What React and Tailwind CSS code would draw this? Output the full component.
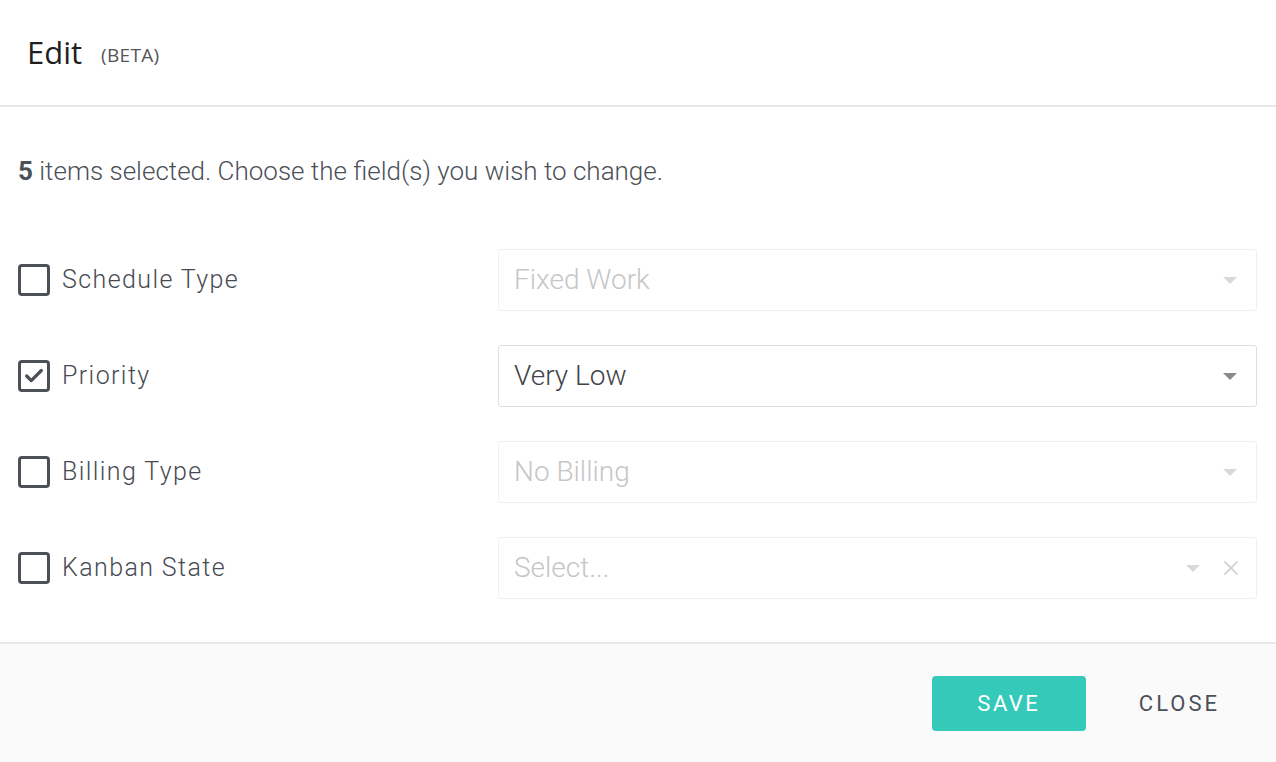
import { Check, X } from 'lucide-react';

const fields = [
  { label: 'Schedule Type', value: 'Fixed Work', checked: false },
  { label: 'Priority', value: 'Very Low', checked: true },
  { label: 'Billing Type', value: 'No Billing', checked: false },
  { label: 'Kanban State', value: 'Select...', checked: false, clearable: true },
];

const Caret = ({ className }) => (
  <svg width="14" height="7" viewBox="0 0 14 7" className={className}>
    <path d="M0 0 L14 0 L7 7 Z" fill="currentColor" />
  </svg>
);

const App = () => {
  return (
    <div className="w-[1276px] h-[762px] flex flex-col bg-white font-['Roboto',sans-serif] text-[#4b5058]">
      <div className="h-[107px] flex items-center px-[27px] border-b-2 border-[#e6e8eb] shrink-0">
        <h1 className="font-['Open_Sans',sans-serif] text-[31px] text-[#1f1f1f] leading-none">Edit</h1>
        <span className="font-['Open_Sans',sans-serif] text-[19px] tracking-[0.3px] text-[#555] ml-[19px] mt-[6px]">(BETA)</span>
      </div>

      <div className="flex-1 px-[18px]">
        <p className="mt-[49px] text-[26px] leading-[30px] font-light text-[#4b5058]">
          <span className="font-bold">5</span> items selected. Choose the field(s) you wish to change.
        </p>

        <div className="mt-[63px] flex flex-col gap-[34px] pr-px">
          {fields.map((f) => (
            <div key={f.label} className="flex items-center h-[62px]">
              <div className="w-[480px] flex items-center">
                <div className="w-[32px] h-[32px] border-[3px] border-[#4b5058] rounded-[4px] flex items-center justify-center">
                  {f.checked && <Check size={22} strokeWidth={3.5} className="text-[#4b5058]" />}
                </div>
                <span className="ml-[12px] text-[25px] font-light tracking-[1.4px] text-[#464b52]">{f.label}</span>
              </div>
              <div
                className={`flex-1 h-[62px] flex items-center rounded-[3px] border pl-[15px] pr-[19px] ${
                  f.checked ? 'border-[#dcdfe2]' : 'border-[#f0f0f0]'
                }`}
              >
                <span
                  className={`flex-1 text-[28px] font-light ${
                    f.checked ? 'text-[#3f444a]' : 'text-[#c6c6c6]'
                  }`}
                >
                  {f.value}
                </span>
                <Caret className={f.checked ? 'text-[#8a8a8a]' : 'text-[#d9d9d9]'} />
                {f.clearable && <X size={24} strokeWidth={2} className="ml-[19px] -mr-[6px] text-[#d6d6d6]" />}
              </div>
            </div>
          ))}
        </div>
      </div>

      <div className="h-[120px] shrink-0 bg-[#fafafa] border-t-2 border-[#e6e8eb] flex items-center justify-end pr-[56px]">
        <button className="w-[154px] h-[55px] mt-px rounded-[4px] bg-[#35c9b9] text-white text-[22px] tracking-[2.5px]">
          SAVE
        </button>
        <button className="ml-[53px] text-[22px] tracking-[3px] text-[#4b5058]">CLOSE</button>
      </div>
    </div>
  );
};

export default App;
